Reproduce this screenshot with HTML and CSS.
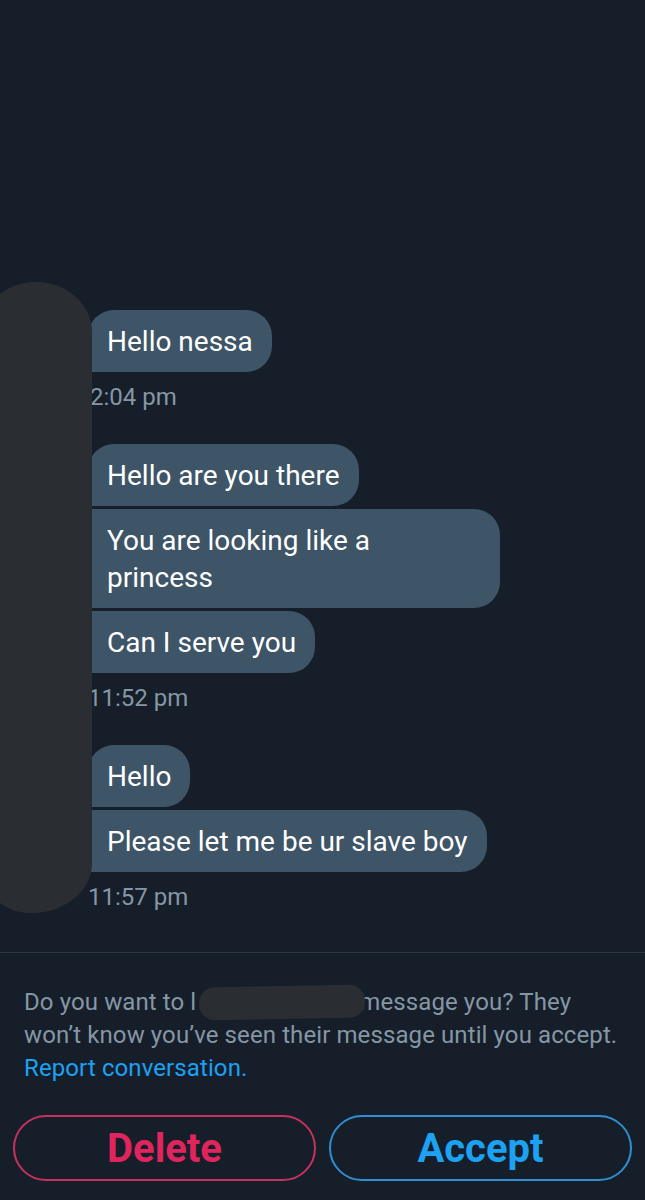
FILE: index.html
```html
<!DOCTYPE html>
<html>
<head>
<meta charset="utf-8">
<link rel="stylesheet" href="styles.css">
</head>
<body>
<div class="screen">
  <div class="chat">
    <div class="group">
      <div class="bubble first last">Hello nessa</div>
      <div class="time shift">2:04 pm</div>
    </div>
    <div class="group">
      <div class="bubble first">Hello are you there</div>
      <div class="bubble">You are looking like a princess</div>
      <div class="bubble last">Can I serve you</div>
      <div class="time">11:52 pm</div>
    </div>
    <div class="group">
      <div class="bubble first">Hello</div>
      <div class="bubble last">Please let me be ur slave boy</div>
      <div class="time">11:57 pm</div>
    </div>
    <div class="redact-avatar"></div>
  </div>
  <div class="request">
    <p class="notice">Do you want to l<span class="redact-name"></span>message you? They won’t know you’ve seen their message until you accept. <a class="report" href="#">Report conversation.</a></p>
    <div class="actions">
      <button class="btn delete">Delete</button>
      <button class="btn accept">Accept</button>
    </div>
  </div>
</div>
</body>
</html>
```

FILE: styles.css
```css
* { box-sizing: border-box; }
html, body {
  margin: 0;
  padding: 0;
  background: #151e29;
  font-family: Roboto, "Noto Sans", "Liberation Sans", sans-serif;
}
.screen {
  width: 645px;
  height: 1200px;
  overflow: hidden;
  display: flex;
  flex-direction: column;
}
.chat {
  position: relative;
  height: 953px;
  flex: none;
  display: flex;
  flex-direction: column;
  justify-content: flex-end;
  gap: 34px;
  padding: 0 0 42px 88px;
  border-bottom: 1px solid #2c3744;
}
.group {
  display: flex;
  flex-direction: column;
  align-items: flex-start;
  gap: 3px;
}
.bubble {
  background: #3e5467;
  color: #ffffff;
  font-size: 28px;
  line-height: 37px;
  padding: 12.5px 19px;
  border-radius: 4px 26px 26px 4px;
  max-width: 412px;
}
.bubble.first { border-top-left-radius: 26px; }
.time {
  color: #8596a5;
  font-size: 24px;
  line-height: 26px;
  margin-top: 9px;
}
.time.shift { padding-left: 2px; }
.redact-avatar {
  position: absolute;
  left: -20px;
  top: 282px;
  width: 112px;
  height: 631px;
  background: #2a2e32;
  border-radius: 56px 56px 60px 50px / 50px 50px 50px 50px;
}
.request {
  padding: 33px 13px 0;
}
.notice {
  margin: 0;
  padding: 0 0 0 11px;
  color: #8596a5;
  font-size: 24px;
  line-height: 32.5px;
  letter-spacing: 0.1px;
}
.redact-name {
  display: inline-block;
  position: relative;
  width: 166px;
  height: 33px;
  margin-left: 3px;
  margin-right: -6px;
  vertical-align: -9px;
  background: #2a2e32;
  border-radius: 16px;
  transform: rotate(-1deg);
}
.report {
  color: #1da1f2;
  text-decoration: none;
}
.actions {
  display: flex;
  gap: 13px;
  margin-top: 31px;
}
.btn {
  flex: 1;
  height: 66px;
  background: transparent;
  border: 2px solid;
  border-radius: 33px;
  font-family: Roboto, "Noto Sans", sans-serif;
  font-weight: 700;
  font-size: 40px;
  padding: 0;
}
.delete { color: #e0245e; border-color: #c8315f; }
.accept { color: #1da1f2; border-color: #2f8fd0; }
```
